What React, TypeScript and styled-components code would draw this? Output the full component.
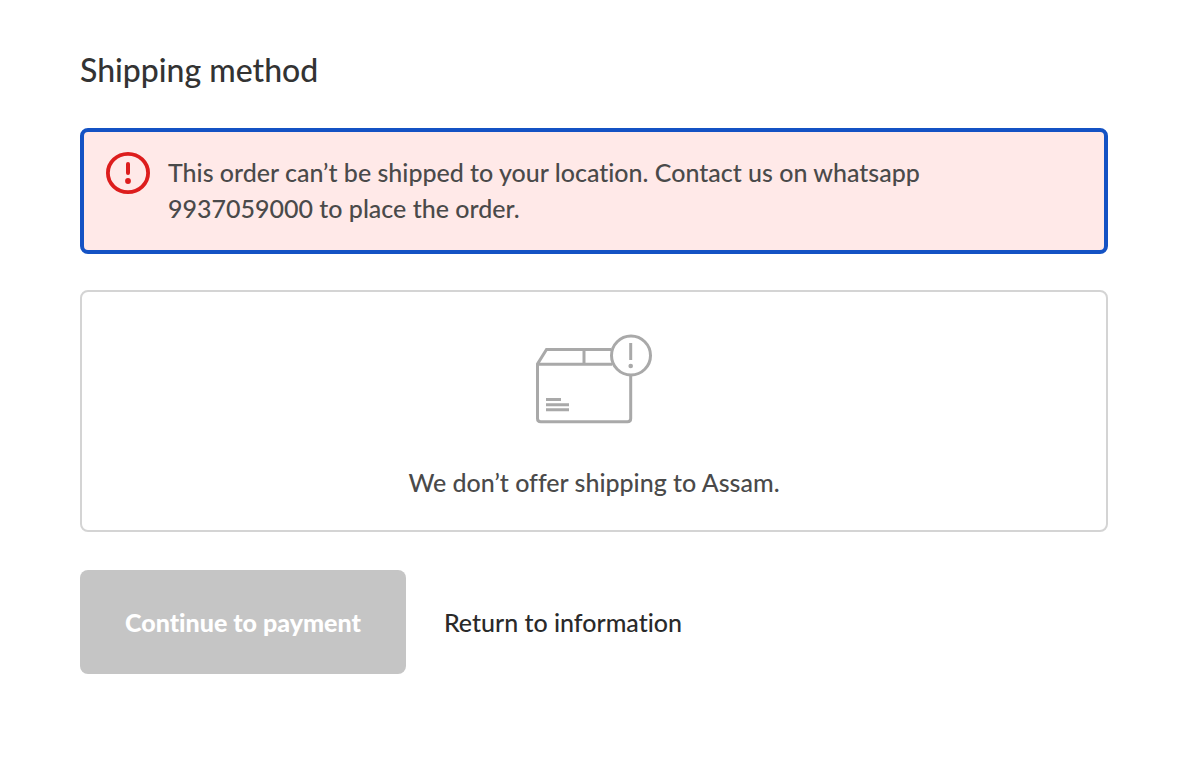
import React from "react";
import styled, { createGlobalStyle } from "styled-components";

const Global = createGlobalStyle`
  *, *::before, *::after { box-sizing: border-box; }
  body { margin: 0; background: #fff; color: #4a4a4a; font-family: Lato, "Liberation Sans", sans-serif; font-size: 25px; font-weight: 500; line-height: 36px; font-variant-ligatures: none; }
`;
const Page = styled.main`
  padding: 48px 84px 48px 80px;
`;
const Title = styled.h2`
  margin: 0 0 36px;
  font-size: 32px;
  line-height: 44px;
  font-weight: 500;
  color: #333;
`;
const Notice = styled.div`
  display: flex;
  align-items: flex-start;
  gap: 18px;
  padding: 20px 22px 24px;
  border: 4px solid #1452c4;
  border-radius: 8px;
  background: #ffe9e8;
  margin-bottom: 36px;
`;
const NoticeText = styled.p`
  margin: 2px 0 0;
  max-width: 780px;
`;
const NoticeIcon = styled.svg`
  flex: none;
  width: 44px;
  height: 44px;
`;
const EmptyCard = styled.div`
  display: flex;
  flex-direction: column;
  align-items: center;
  gap: 40px;
  padding: 42px 24px 30px;
  border: 2px solid #d4d4d4;
  border-radius: 8px;
  margin-bottom: 38px;
`;
const BoxIcon = styled.svg`
  width: 116px;
  height: 90px;
`;
const EmptyText = styled.p`
  margin: 0;
`;
const Actions = styled.div`
  display: flex;
  align-items: center;
  gap: 38px;
`;
const ContinueButton = styled.button`
  height: 104px;
  padding: 0 45px;
  border: 0;
  border-radius: 8px;
  background: #c5c5c5;
  color: #fff;
  font: inherit;
  font-weight: 900;
  font-variant-ligatures: none;
`;
const BackLink = styled.a`
  color: #2a2a2a;
  text-decoration: none;
`;

export default function App() {
  return (
    <Page>
      <Global />
      <Title>Shipping method</Title>
      <Notice role="alert" tabIndex={-1}>
        <NoticeIcon viewBox="0 0 44 44" fill="none" aria-hidden="true">
          <ellipse cx="22" cy="21" rx="20.100" ry="19.100" stroke="#dd1d1d" strokeWidth="3.800" />
          <path d="M22 12v9" stroke="#dd1d1d" strokeWidth="4" strokeLinecap="round" />
          <circle cx="22" cy="29" r="2.900" fill="#dd1d1d" />
        </NoticeIcon>
        <NoticeText>
          This order can’t be shipped to your location. Contact us on whatsapp 9937059000 to place the order.
        </NoticeText>
      </Notice>
      <EmptyCard>
        <BoxIcon viewBox="536 334 116 90" fill="none" stroke="#a9a9a9" strokeWidth="3" aria-hidden="true">
          <path d="M611 349.500H546.500L537.500 364V418.500Q537.500 421.700 540.700 421.700H627.500Q630.700 421.700 630.700 418.500V376M537.500 364.300H612M584 349.500V364" />
          <path d="M546 399.500H561M546 404.700H569M546 409.700H569" />
          <circle cx="631" cy="355.500" r="19.500" />
          <path d="M630.700 343V360" />
          <circle cx="630.700" cy="366" r="2.300" fill="#a9a9a9" stroke="none" />
        </BoxIcon>
        <EmptyText>We don’t offer shipping to Assam.</EmptyText>
      </EmptyCard>
      <Actions>
        <ContinueButton type="button" disabled>Continue to payment</ContinueButton>
        <BackLink href="#information">Return to information</BackLink>
      </Actions>
    </Page>
  );
}
